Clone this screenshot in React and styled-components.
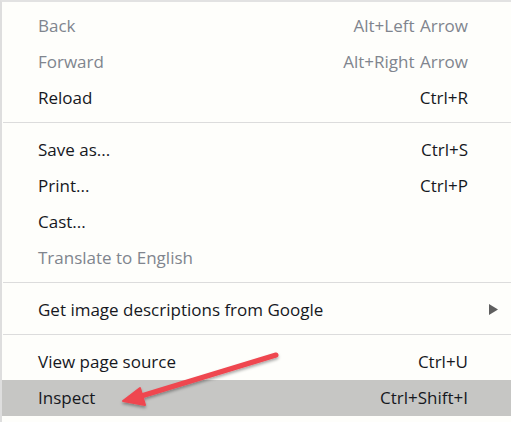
import React from "react";
import styled, { createGlobalStyle } from "styled-components";

const Global = createGlobalStyle`
  html, body { margin: 0; padding: 0; background: #fefefb; }
  body { width: 511px; height: 422px; overflow: hidden; }
`;

const Menu = styled.div`
  position: relative;
  box-sizing: border-box;
  width: 511px;
  height: 422px;
  background: #fefefb;
  border-left: 2px solid #dedede;
  border-top: 2px solid #e2e2e2;
  padding: 6px 0 6px 0;
  font-family: "Open Sans", "Noto Sans", sans-serif;
  font-size: 17px;
`;

const Item = styled.div`
  box-sizing: border-box;
  display: flex;
  align-items: center;
  height: 36px;
  padding: 0 43px 2px 36px;
  background: ${(p) => (p.$active ? "#c6c6c4" : "transparent")};
  color: ${(p) => (p.$disabled ? "#80858e" : "#16181e")};
`;

const Label = styled.span`
  flex: 1;
  white-space: nowrap;
`;

const Shortcut = styled.span`
  white-space: nowrap;
  word-spacing: 1px;
`;

const Separator = styled.div`
  box-sizing: border-box;
  height: 16px;
  padding-top: 6px;
  &::after {
    content: "";
    display: block;
    height: 1px;
    background: #dcdcdc;
    margin-left: 1px;
  }
`;

const SubArrow = styled.svg`
  position: absolute;
  right: 13px;
  width: 9px;
  height: 11px;
`;

const SubItem = styled(Item)`
  position: relative;
`;

const Overlay = styled.svg`
  position: absolute;
  left: -2px;
  top: -2px;
  width: 511px;
  height: 422px;
  pointer-events: none;
`;

const groups = [
  [
    { label: "Back", shortcut: "Alt+Left Arrow", disabled: true },
    { label: "Forward", shortcut: "Alt+Right Arrow", disabled: true },
    { label: "Reload", shortcut: "Ctrl+R" },
  ],
  [
    { label: "Save as...", shortcut: "Ctrl+S" },
    { label: "Print...", shortcut: "Ctrl+P" },
    { label: "Cast..." },
    { label: "Translate to English", disabled: true },
  ],
  [{ label: "Get image descriptions from Google", sub: true }],
  [
    { label: "View page source", shortcut: "Ctrl+U" },
    { label: "Inspect", shortcut: "Ctrl+Shift+I", active: true },
  ],
];

export default function App() {
  return (
    <>
      <Global />
      <Menu>
        {groups.map((g, gi) => (
          <React.Fragment key={gi}>
            {gi > 0 && <Separator />}
            {g.map((it) =>
              it.sub ? (
                <SubItem key={it.label}>
                  <Label>{it.label}</Label>
                  <SubArrow viewBox="0 0 9 11">
                    <path d="M0 0 L9 5.5 L0 11 Z" fill="#5f5f5f" />
                  </SubArrow>
                </SubItem>
              ) : (
                <Item key={it.label} $disabled={it.disabled} $active={it.active}>
                  <Label>{it.label}</Label>
                  {it.shortcut && <Shortcut>{it.shortcut}</Shortcut>}
                </Item>
              )
            )}
          </React.Fragment>
        ))}
        <Overlay viewBox="0 0 511 422">
          <defs>
            <filter id="sh" x="-20%" y="-50%" width="140%" height="200%">
              <feDropShadow dx="0" dy="2" stdDeviation="1.5" floodColor="#000" floodOpacity="0.35" />
            </filter>
          </defs>
          <g filter="url(#sh)">
            <line x1="276" y1="355" x2="138" y2="397" stroke="#ef4650" strokeWidth="5" strokeLinecap="round" />
            <path d="M123 401 L140 388 L145 405 Z" fill="#ef4650" stroke="#ef4650" strokeWidth="2" strokeLinejoin="round" />
          </g>
        </Overlay>
      </Menu>
    </>
  );
}
